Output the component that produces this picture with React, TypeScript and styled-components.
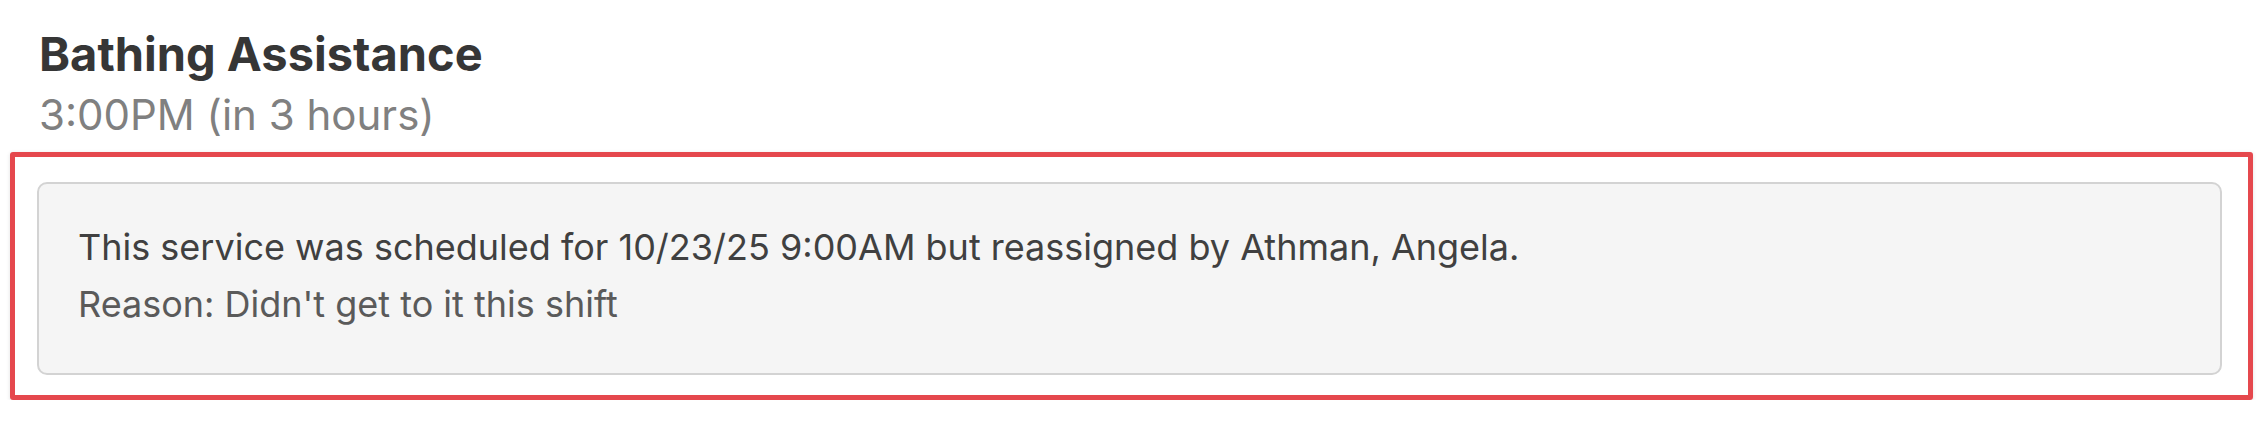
import React from "react";
import styled, { createGlobalStyle } from "styled-components";

const GlobalStyle = createGlobalStyle`
  body {
    margin: 0;
    background: #ffffff;
    font-family: Inter, "Noto Sans", "Liberation Sans", sans-serif;
  }
`;

const Page = styled.div`
  padding: 26px 9px 0 10px;
`;

const Header = styled.div`
  padding-left: 29px;
  margin-bottom: 5px;
`;

const Title = styled.h2`
  margin: 0;
  font-size: 47px;
  line-height: 56px;
  font-weight: 700;
  color: #363636;
`;

const Time = styled.div`
  font-size: 42px;
  line-height: 65px;
  color: #808080;
`;

const Highlight = styled.div`
  border: 5px solid #e5484d;
  border-radius: 3px;
  box-shadow: 0 1px 4px rgba(0, 0, 0, 0.12);
  padding: 25px 26px 20px 22px;
`;

const Notice = styled.div`
  background: #f5f5f5;
  border: 2px solid #d3d3d3;
  border-radius: 10px;
  padding: 35px 39px 40px;
`;

const Line = styled.p<{ $muted?: boolean }>`
  margin: 0;
  font-size: 36px;
  line-height: 57px;
  color: ${p => (p.$muted ? "#5a5a5a" : "#404040")};
`;

export default function App() {
  return (
    <>
      <GlobalStyle />
      <Page>
        <Header>
          <Title>Bathing Assistance</Title>
          <Time>3:00PM (in 3 hours)</Time>
        </Header>
        <Highlight>
          <Notice>
            <Line>This service was scheduled for 10/23/25 9:00AM but reassigned by Athman, Angela.</Line>
            <Line $muted>Reason: Didn't get to it this shift</Line>
          </Notice>
        </Highlight>
      </Page>
    </>
  );
}
